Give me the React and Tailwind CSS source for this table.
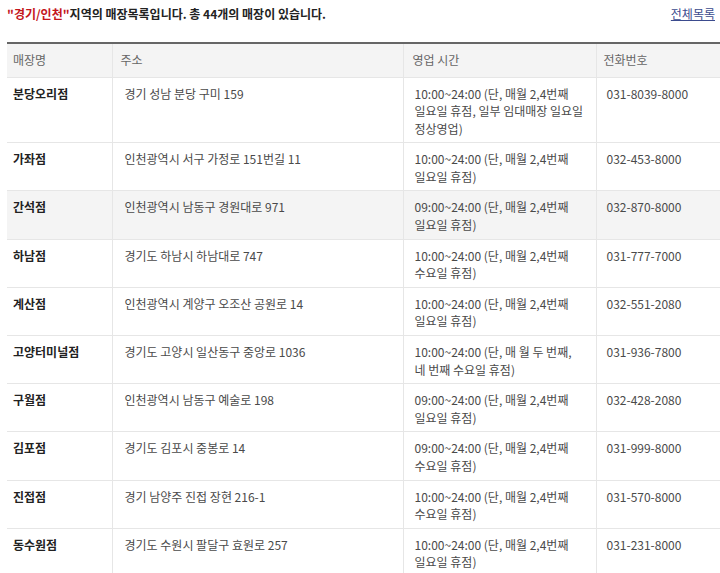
const stores = [
  {
    name: '분당오리점',
    address: '경기 성남 분당 구미 159',
    hours: ['10:00~24:00 (단, 매월 2,4번째', '일요일 휴점, 일부 임대매장 일요일', '정상영업)'],
    phone: '031-8039-8000',
  },
  {
    name: '가좌점',
    address: '인천광역시 서구 가정로 151번길 11',
    hours: ['10:00~24:00 (단, 매월 2,4번째', '일요일 휴점)'],
    phone: '032-453-8000',
  },
  {
    name: '간석점',
    address: '인천광역시 남동구 경원대로 971',
    hours: ['09:00~24:00 (단, 매월 2,4번째', '일요일 휴점)'],
    phone: '032-870-8000',
    active: true,
  },
  {
    name: '하남점',
    address: '경기도 하남시 하남대로 747',
    hours: ['10:00~24:00 (단, 매월 2,4번째', '수요일 휴점)'],
    phone: '031-777-7000',
  },
  {
    name: '계산점',
    address: '인천광역시 계양구 오조산 공원로 14',
    hours: ['10:00~24:00 (단, 매월 2,4번째', '일요일 휴점)'],
    phone: '032-551-2080',
  },
  {
    name: '고양터미널점',
    address: '경기도 고양시 일산동구 중앙로 1036',
    hours: ['10:00~24:00 (단, 매 월 두 번째,', '네 번째 수요일 휴점)'],
    phone: '031-936-7800',
  },
  {
    name: '구월점',
    address: '인천광역시 남동구 예술로 198',
    hours: ['09:00~24:00 (단, 매월 2,4번째', '일요일 휴점)'],
    phone: '032-428-2080',
  },
  {
    name: '김포점',
    address: '경기도 김포시 중봉로 14',
    hours: ['09:00~24:00 (단, 매월 2,4번째', '수요일 휴점)'],
    phone: '031-999-8000',
  },
  {
    name: '진접점',
    address: '경기 남양주 진접 장현 216-1',
    hours: ['10:00~24:00 (단, 매월 2,4번째', '수요일 휴점)'],
    phone: '031-570-8000',
  },
  {
    name: '동수원점',
    address: '경기도 수원시 팔달구 효원로 257',
    hours: ['10:00~24:00 (단, 매월 2,4번째', '일요일 휴점)'],
    phone: '031-231-8000',
  },
]

const font = "font-['Noto_Sans_CJK_KR','Noto_Sans',sans-serif]"

export default function App() {
  return (
    <div className={`w-[720px] h-[573px] overflow-hidden bg-white ${font} text-[12px] text-[#4a4a4a]`}>
      {/* Heading */}
      <div className="flex items-start justify-between pl-[7px] pr-[5px] pt-[5px] h-[42px]">
        <p className="font-bold text-[#222] leading-[18px]">
          <span className="text-[#c4161c]">"경기/인천"</span>지역의 매장목록입니다. 총 44개의 매장이 있습니다.
        </p>
        <a href="#" className="text-[#3b4b8e] underline leading-[18px]">
          전체목록
        </a>
      </div>

      {/* Store table */}
      <table className="ml-[7px] w-[713px] table-fixed border-collapse border-t-2 border-[#666]">
        <colgroup>
          <col className="w-[105px]" />
          <col className="w-[291px]" />
          <col className="w-[193px]" />
          <col />
        </colgroup>
        <thead>
          <tr className="bg-[#f4f4f4] text-[#666] h-[34px]">
            <th className="font-normal text-left pl-[6px] border-r border-b border-[#e6e6e6]">매장명</th>
            <th className="font-normal text-left pl-[8px] border-r border-b border-[#e6e6e6]">주소</th>
            <th className="font-normal text-left pl-[9px] border-r border-b border-[#e6e6e6]">영업 시간</th>
            <th className="font-normal text-left pl-[7px] border-b border-[#e6e6e6]">전화번호</th>
          </tr>
        </thead>
        <tbody className="leading-[17.6px]">
          {stores.map((s) => (
            <tr key={s.name} className={s.active ? 'bg-[#f4f4f4]' : 'bg-white'}>
              <td className="align-top pl-[6px] pt-[7px] pb-[5px] border-r border-b border-[#e6e6e6] font-bold text-[#222]">
                {s.name}
              </td>
              <td className="align-top pl-[12px] pt-[7px] pb-[5px] border-r border-b border-[#e6e6e6]">
                {s.address}
              </td>
              <td className="align-top pl-[11px] pt-[7px] pb-[5px] border-r border-b border-[#e6e6e6] whitespace-nowrap">
                {s.hours.map((line, i) => (
                  <div key={i}>{line}</div>
                ))}
              </td>
              <td className="align-top pl-[10px] pt-[7px] pb-[5px] border-b border-[#e6e6e6]">
                {s.phone}
              </td>
            </tr>
          ))}
        </tbody>
      </table>
    </div>
  )
}
